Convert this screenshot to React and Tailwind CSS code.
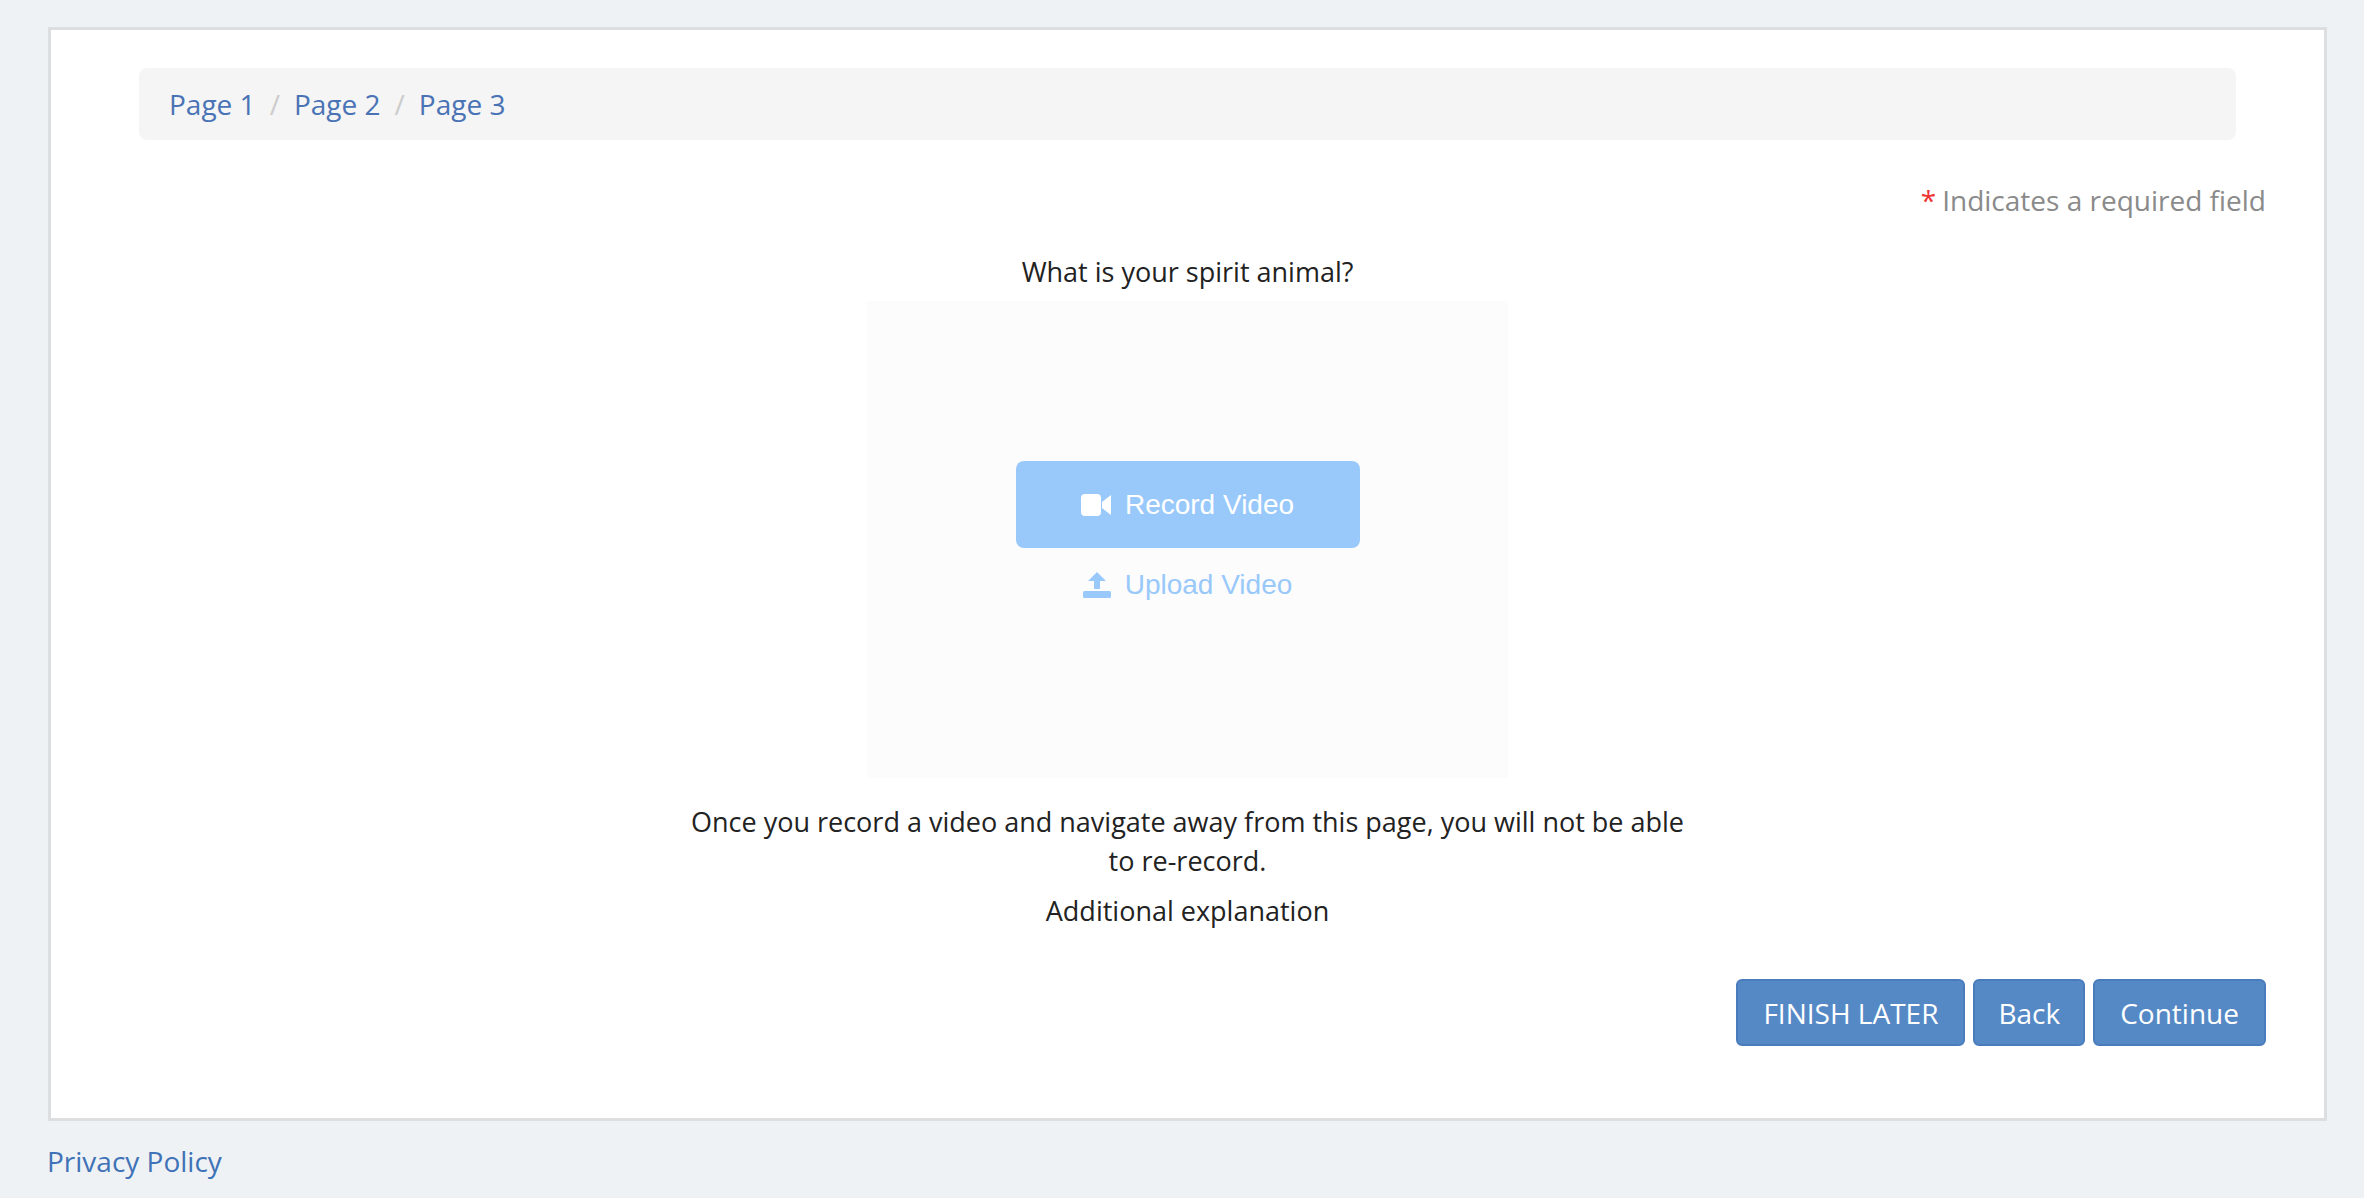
export default function App() {
  const f = { fontFamily: '"Open Sans", sans-serif' };
  const a = { fontFamily: '"Liberation Sans", Arial, sans-serif' };
  return (
    <div className="w-[2364px] h-[1198px] bg-[#eff2f5] pt-[27px]" style={f}>
      <div className="ml-[48px] w-[2279px] h-[1094px] bg-white border-[3px] border-[#dcdee0] px-[88px] pt-[38px]">
        <div className="h-[72px] bg-[#f5f5f5] rounded-[8px] flex items-center px-[30px] text-[28px] text-[#4a73b5]">
          <span>Page 1</span>
          <span className="text-[#ccc] px-[14px]">/</span>
          <span>Page 2</span>
          <span className="text-[#ccc] px-[14px]">/</span>
          <span>Page 3</span>
        </div>
        <div className="flex justify-end mt-[40px] mr-[-30px] text-[28px] text-[#8a8a8a] leading-[40px]">
          <span><span className="text-[#e33] mr-[6px]">*</span>Indicates a required field</span>
        </div>
        <div className="flex flex-col items-center">
          <div className="mt-[32px] text-[27px] text-[#222] leading-[40px]">What is your spirit animal?</div>
          <div className="mt-[9px] w-[641px] h-[477px] bg-[#fcfcfc] flex flex-col items-center pt-[160px]" style={a}>
            <div className="w-[344px] h-[87px] rounded-[8px] bg-[#99c9fa] text-white flex items-center justify-center gap-[14px] text-[28px]">
              <svg width="30" height="22" viewBox="0 0 30 22" fill="white"><rect x="0" y="0" width="20" height="22" rx="4" /><path d="M21 8 L30 1 V21 L21 14 Z" /></svg>
              Record Video
            </div>
            <div className="mt-[16px] flex items-center gap-[14px] text-[28px] text-[#99c9fa]">
              <svg width="28" height="26" viewBox="0 0 28 26" fill="#99c9fa"><path d="M14 0 L23 9 H17 V17 H11 V9 H5 Z" /><rect x="0" y="19" width="28" height="7" rx="1.5" /></svg>
              Upload Video
            </div>
          </div>
          <div className="mt-[24px] w-[1025px] text-center text-[27px] text-[#222] leading-[39px]">
            Once you record a video and navigate away from this page, you will not be able to re-record.
          </div>
          <div className="mt-[11px] text-[27px] text-[#222] leading-[39px]">Additional explanation</div>
        </div>
        <div className="flex justify-end gap-[8px] mt-[49px] mr-[-30px] text-[28px] text-white">
          <div className="h-[67px] px-[25px] flex items-center bg-[#5589c6] border-2 border-[#4a7bbd] rounded-[6px]">FINISH LATER</div>
          <div className="h-[67px] px-[23px] flex items-center bg-[#5589c6] border-2 border-[#4a7bbd] rounded-[6px]">Back</div>
          <div className="h-[67px] px-[25px] flex items-center bg-[#5589c6] border-2 border-[#4a7bbd] rounded-[6px]">Continue</div>
        </div>
      </div>
      <div className="ml-[47px] mt-[19px] text-[28px] text-[#3f72b6]">Privacy Policy</div>
    </div>
  );
}
